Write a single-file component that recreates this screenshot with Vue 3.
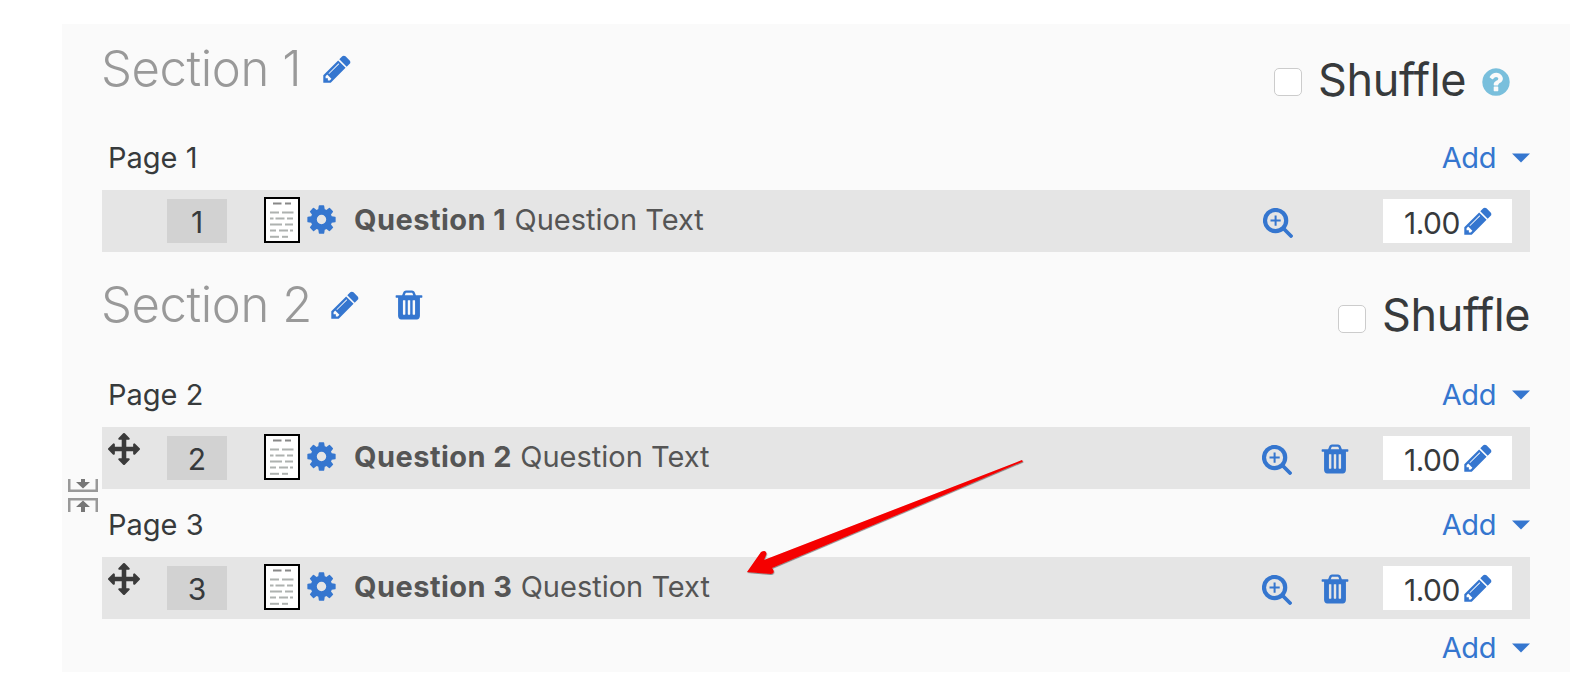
<template>
  <div class="panel">
    <section v-for="section in sections" :key="section.title" class="section">
      <header class="section-head" :class="section.headClass">
        <h2 class="section-title">{{ section.title }}</h2>
        <svg class="icon icon-title-edit" viewBox="0 0 1792 1792"><path :d="icons.pencil" /></svg>
        <svg v-if="section.removable" class="icon icon-title-trash" viewBox="0 0 1792 1792"><path :d="icons.trash" /></svg>
        <label class="shuffle">
          <span class="checkbox"></span>
          <span class="shuffle-text">Shuffle</span>
          <svg v-if="section.help" class="icon-help" viewBox="0 0 1792 1792"><path :d="icons.help" /></svg>
        </label>
      </header>

      <div v-for="page in section.pages" :key="page.name" class="page">
        <div class="page-head">
          <span class="page-name">{{ page.name }}</span>
          <a class="add">Add<svg class="caret" viewBox="0 0 18 10"><path d="M0 0.5h18L9 9.5z" /></svg></a>
        </div>
        <div class="row">
          <div class="move">
            <svg v-if="page.movable" class="icon-move" viewBox="0 0 1792 1792"><path :d="icons.move" /></svg>
          </div>
          <div class="slot">{{ page.slot }}</div>
          <svg class="doc" viewBox="0 0 36 46">
            <rect x="1" y="1" width="34" height="44" fill="#fff" stroke="#000" stroke-width="2" />
            <rect v-for="(line, i) in docLines" :key="i" :x="line[0]" :y="line[1]" :width="line[2]" height="2"
              :fill="line[1] < 10 ? '#888' : '#aeb2b0'" />
          </svg>
          <svg class="icon icon-gear" viewBox="0 0 1792 1792"><path :d="icons.gear" /></svg>
          <div class="question"><b>Question {{ page.slot }}</b> Question Text</div>
          <svg class="zoom" viewBox="0 0 30 30" :class="{ 'zoom-only': !page.movable }">
            <circle cx="12.6" cy="12.6" r="10.6" fill="none" stroke="#3576cf" stroke-width="4.2" />
            <path d="M12.6 7.5v10.2M7.5 12.6h10.2" stroke="#3576cf" stroke-width="2" fill="none" />
            <path d="M21 21l7 7" stroke="#3576cf" stroke-width="3.8" stroke-linecap="round" />
          </svg>
          <svg v-if="page.movable" class="icon icon-row-trash" viewBox="0 0 1792 1792"><path :d="icons.trash" /></svg>
          <div class="mark">
            <span>1.00</span>
            <svg class="icon icon-mark-edit" viewBox="0 0 1792 1792"><path :d="icons.pencil" /></svg>
          </div>
        </div>
      </div>
    </section>

    <div class="last-add">
      <a class="add">Add<svg class="caret" viewBox="0 0 18 10"><path d="M0 0.5h18L9 9.5z" /></svg></a>
    </div>

    <!-- 两页之间的“合并分页”小图标，压在左侧留白上 -->
    <svg class="collapse" viewBox="0 0 30 33">
      <path d="M0 0h2.5v10.5h25V0H30v13H0zM0 33h2.5V21.5h25V33H30V19H0z" fill="#999" />
      <path d="M13 0h4v3h5l-7 6.500L8 3h5zM13 33h4v-5h5l-7-6.500L8 28h5z" fill="#777" />
    </svg>

    <svg class="arrow" viewBox="0 0 300 130">
      <defs>
        <filter id="arrow-shadow" x="-5%" y="-5%" width="110%" height="115%">
          <feDropShadow dx="0.4" dy="0.8" stdDeviation="0.5" flood-color="#333" flood-opacity="0.65" />
        </filter>
      </defs>
      <path filter="url(#arrow-shadow)" fill="#f50000"
        d="M287 5L288 6.500L37 113Q41 118 36 119L12 117L26 97Q31 94 31.500 99L29 105z" />
    </svg>
  </div>
</template>

<script setup>
const icons = {
  pencil: 'M491 1536l91-91-235-235-91 91v107h128v128h107zm523-928q0-22-22-22-10 0-17 7l-542 542q-7 7-7 17 0 22 22 22 10 0 17-7l542-542q7-7 7-17zm-54-192l416 416-832 832h-416v-416zm683 96q0 53-37 90l-166 166-416-416 166-165q36-38 90-38 53 0 91 38l235 234q37 39 37 91z',
  gear: 'M1152 896q0-106-75-181t-181-75-181 75-75 181 75 181 181 75 181-75 75-181zm512-109v222q0 12-8 23t-20 13l-185 28q-19 54-39 91 35 50 107 138 10 12 10 25t-9 23q-27 37-99 108t-94 71q-12 0-26-9l-138-108q-44 23-91 38-16 136-29 186-7 28-36 28h-222q-14 0-24.500-8.500t-11.500-21.500l-28-184q-49-16-90-37l-141 107q-10 9-25 9-14 0-25-11-126-114-165-168-7-10-7-23 0-12 8-23 15-21 51-66.500t54-70.500q-27-50-41-99l-183-27q-13-2-21-12.500t-8-23.500v-222q0-12 8-23t19-13l186-28q14-46 39-92-40-57-107-138-10-12-10-24 0-10 9-23 26-36 98.500-107.500t94.500-71.500q13 0 26 10l138 107q44-23 91-38 16-136 29-186 7-28 36-28h222q14 0 24.500 8.500t11.500 21.500l28 184q49 16 90 37l142-107q9-9 24-9 13 0 25 10 129 119 165 170 7 8 7 22 0 12-8 23-15 21-51 66.500t-54 70.500q26 50 41 98l183 28q13 2 21 12.500t8 23.500z',
  trash: 'M704 1376v-704q0-14-9-23t-23-9h-64q-14 0-23 9t-9 23v704q0 14 9 23t23 9h64q14 0 23-9t9-23zm256 0v-704q0-14-9-23t-23-9h-64q-14 0-23 9t-9 23v704q0 14 9 23t23 9h64q14 0 23-9t9-23zm256 0v-704q0-14-9-23t-23-9h-64q-14 0-23 9t-9 23v704q0 14 9 23t23 9h64q14 0 23-9t9-23zm-544-992h448l-48-117q-7-9-17-11h-317q-10 2-17 11zm928 32v64q0 14-9 23t-23 9h-96v948q0 83-47 143.500t-113 60.500h-832q-66 0-113-58.500t-47-141.500v-952h-96q-14 0-23-9t-9-23v-64q0-14 9-23t23-9h309l70-167q15-37 54-63t79-26h320q40 0 79 26t54 63l70 167h309q14 0 23 9t9 23z',
  move: 'M1792 896q0 26-19 45l-256 256q-19 19-45 19t-45-19-19-45v-128h-384v384h128q26 0 45 19t19 45-19 45l-256 256q-19 19-45 19t-45-19l-256-256q-19-19-19-45t19-45 45-19h128v-384h-384v128q0 26-19 45t-45 19-45-19l-256-256q-19-19-19-45t19-45l256-256q19-19 45-19t45 19 19 45v128h384v-384h-128q-26 0-45-19t-19-45 19-45l256-256q19-19 45-19t45 19l256 256q19 19 19 45t-19 45-45 19h-128v384h384v-128q0-26 19-45t45-19 45 19l256 256q19 19 19 45z',
  help: 'M1024 1376v-192q0-14-9-23t-23-9h-192q-14 0-23 9t-9 23v192q0 14 9 23t23 9h192q14 0 23-9t9-23zm256-672q0-88-55.500-163t-138.500-116-170-41q-243 0-371 213-15 24 8 42l132 100q7 6 19 6 16 0 25-12 53-68 86-92 34-24 86-24 48 0 85.500 26t37.500 59q0 38-20 61t-68 45q-63 28-115.500 86.500t-52.500 125.500v36q0 14 9 23t23 9h192q14 0 23-9t9-23q0-19 21.500-49.500t54.500-49.500q32-18 49-28.500t46-35 44.500-48 28-60.500 12.500-81zm384 192q0 209-103 385.500t-279.500 279.500-385.500 103-385.500-103-279.500-279.500-103-385.500 103-385.500 279.500-279.500 385.500-103 385.500 103 279.500 279.500 103 385.500z'
}

const sections = [
  {
    title: 'Section 1',
    help: true,
    removable: false,
    headClass: 'head-first',
    pages: [{ name: 'Page 1', slot: 1, movable: false }]
  },
  {
    title: 'Section 2',
    help: false,
    removable: true,
    headClass: 'head-second',
    pages: [
      { name: 'Page 2', slot: 2, movable: true },
      { name: 'Page 3', slot: 3, movable: true }
    ]
  }
]

// 文档图标里的灰色短线：x, y, 宽
const docLines = [
  [9, 5.5, 8.5], [21, 5.5, 6],
  [6, 14.5, 9], [18, 14.5, 11.5],
  [6, 20.5, 3.5], [11.5, 20.5, 9], [23, 20.5, 6],
  [6, 26.5, 12], [21, 26.5, 8],
  [6, 32.5, 6], [15, 32.5, 9], [26, 32.5, 3],
  [6, 38.8, 9], [18, 38.8, 6]
]
</script>

<style>
html, body {
  background: #fff;
  overflow: hidden;
}
</style>

<style scoped>
.panel {
  position: relative;
  box-sizing: border-box;
  width: 1508px;
  height: 648px;
  margin: 24px 0 0 62px;
  padding: 0 0 0 40px;
  background: #fafafa;
  color: #373a3c;
  font-family: Inter, "Liberation Sans", sans-serif;
}

.section-head {
  display: flex;
  box-sizing: border-box;
  width: 1428px;
  align-items: flex-start;
}

.head-first {
  height: 116px;
}

.head-second {
  height: 125px;
}

.section-title {
  margin: 0 0 0 -1px;
  font-size: 49px;
  font-weight: 300;
  line-height: 60px;
  letter-spacing: -0.4px;
  color: #999;
}

.head-first .section-title {
  margin-top: 15px;
}

.head-second .section-title {
  margin-top: 23px;
}

.icon {
  display: block;
  flex: none;
  fill: #3576cf;
}

.icon-title-edit {
  width: 32px;
  height: 32px;
}

.head-first .icon-title-edit {
  margin: 29px 0 0 20px;
}

.head-second .icon-title-edit {
  margin: 37px 0 0 17px;
}

.icon-title-trash {
  width: 34px;
  height: 34px;
  margin: 36px 0 0 31px;
}

.shuffle {
  display: flex;
  align-items: center;
  gap: 16px;
  margin-left: auto;
}

.head-first .shuffle {
  margin-top: 28px;
  padding-right: 18px;
}

.head-second .shuffle {
  margin-top: 35px;
}

.checkbox {
  box-sizing: border-box;
  width: 28px;
  height: 28px;
  border: 1.5px solid #ccc;
  border-radius: 5px;
  background: #fff;
  margin-top: 4px;
}

.head-second .checkbox {
  margin-top: 7px;
}

.shuffle-text {
  font-size: 45px;
  line-height: 56px;
  letter-spacing: -0.4px;
  color: #373a3c;
}

.icon-help {
  display: block;
  width: 32px;
  height: 32px;
  margin: 4px 0 0 -2px;
  fill: #79bfdc;
}

.page-head {
  display: flex;
  align-items: center;
  justify-content: space-between;
  width: 1428px;
  height: 36px;
  padding-bottom: 14px;
}

.page + .page .page-head {
  padding-top: 18px;
}

.page-name {
  margin: 0 0 2px 6px;
  font-size: 29px;
}

.add {
  display: flex;
  align-items: center;
  font-size: 29px;
  line-height: 36px;
  letter-spacing: -0.4px;
  color: #3576cf;
}

.caret {
  display: block;
  width: 18px;
  height: 10px;
  margin-left: 16px;
  fill: #3576cf;
}

.row {
  display: flex;
  align-items: flex-start;
  width: 1428px;
  height: 62px;
  background: #e5e5e5;
}

.move {
  flex: none;
  width: 65px;
  padding-top: 6px;
  padding-left: 6px;
  box-sizing: border-box;
}

.icon-move {
  display: block;
  width: 32px;
  height: 32px;
  fill: #3a3a3a;
}

.slot {
  flex: none;
  width: 60px;
  height: 44px;
  margin-top: 9px;
  background: #d2d2d2;
  font-size: 30px;
  line-height: 47px;
  text-align: center;
  color: #373a3c;
}

.doc {
  display: block;
  flex: none;
  width: 36px;
  height: 46px;
  margin: 7px 0 0 37px;
}

.icon-gear {
  width: 33px;
  height: 33px;
  margin: 13px 0 0 5px;
}

.question {
  flex: none;
  margin: 10px 0 0 16px;
  font-size: 29px;
  line-height: 40px;
  color: #555;
  white-space: pre;
}

.question b {
  font-weight: 700;
  letter-spacing: 0.45px;
}

.zoom {
  display: block;
  flex: none;
  width: 30px;
  height: 30px;
  margin: 18px 0 0 auto;
}

.icon-row-trash {
  width: 34px;
  height: 34px;
  margin: 15px 0 0 26px;
}

.mark {
  display: flex;
  flex: none;
  align-items: center;
  box-sizing: border-box;
  width: 129px;
  height: 44px;
  margin: 9px 18px 0 31px;
  padding-left: 21px;
  background: #fff;
  font-size: 30px;
  letter-spacing: -0.5px;
  color: #373a3c;
}

.mark span {
  padding-top: 3px;
}

.icon-mark-edit {
  width: 32px;
  height: 32px;
  margin-left: 2px;
}

.zoom-only + .mark {
  margin-left: 90px;
}

.last-add {
  display: flex;
  justify-content: flex-end;
  width: 1428px;
  margin-top: 11px;
}

.collapse {
  position: absolute;
  left: 6px;
  top: 455px;
  width: 30px;
  height: 33px;
}

.arrow {
  position: absolute;
  left: 673px;
  top: 431px;
  width: 300px;
  height: 130px;
  overflow: visible;
}
</style>
